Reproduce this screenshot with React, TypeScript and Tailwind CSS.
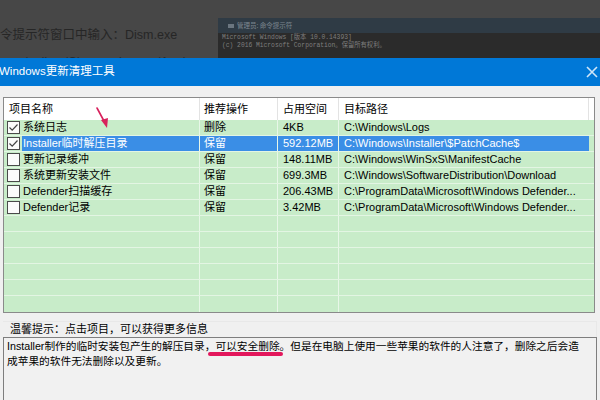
const rows = [
  { name: "系统日志", op: "删除", size: "4KB", path: "C:\\Windows\\Logs", checked: true },
  { name: "Installer临时解压目录", op: "保留", size: "592.12MB", path: "C:\\Windows\\Installer\\$PatchCache$", checked: true, selected: true },
  { name: "更新记录缓冲", op: "保留", size: "148.11MB", path: "C:\\Windows\\WinSxS\\ManifestCache", checked: false },
  { name: "系统更新安装文件", op: "保留", size: "699.3MB", path: "C:\\Windows\\SoftwareDistribution\\Download", checked: false },
  { name: "Defender扫描缓存", op: "保留", size: "206.43MB", path: "C:\\ProgramData\\Microsoft\\Windows Defender...", checked: false },
  { name: "Defender记录", op: "保留", size: "3.42MB", path: "C:\\ProgramData\\Microsoft\\Windows Defender...", checked: false },
];

const font = "font-['Liberation_Sans','Noto_Sans_CJK_SC',sans-serif]";

function Checkbox({ checked }: { checked: boolean }) {
  return (
    <div className="ml-[3px] mr-[2px] w-[13px] h-[13px] shrink-0 border border-[#4a4a4a] bg-[#fbfbfb] flex items-center justify-center">
      {checked && (
        <svg width="11" height="11" viewBox="0 0 11 11">
          <path d="M1.5 5.5 L4.2 8.2 L9.5 2.5" fill="none" stroke="#444" strokeWidth="1.2" />
        </svg>
      )}
    </div>
  );
}

export default function App() {
  const empty = 12 - rows.length;
  return (
    <div className={`relative w-[600px] h-[400px] overflow-hidden bg-[#f0f0f0] flex flex-col ${font}`}>
      {/* background page + cmd window */}
      <div className="relative h-[58px] shrink-0 overflow-hidden bg-[#474747]">
        <div className="pt-[26px] text-[12.5px] leading-[18px] text-[#262626] whitespace-nowrap">令提示符窗口中输入：Dism.exe</div>
        <div className="mt-[9px] ml-[24px] text-[12.5px] leading-[18px] text-[#2a2a2a] whitespace-nowrap">/online /Cleanup-Image /Analyze</div>
        <div className="absolute left-[218px] top-[18px] right-0 bottom-0 flex flex-col bg-[#2b2b2b]">
          <div className="h-[15px] bg-[#2f3b45] flex items-center pl-[10px] gap-[3px]">
            <div className="w-[6px] h-[4px] bg-[#6b7680]" />
            <span className="text-[6.5px] text-[#7d8790] font-['Noto_Sans_CJK_SC',sans-serif]">管理员: 命令提示符</span>
          </div>
          <div className="pl-[4px] pt-[1px] font-['Liberation_Mono','Noto_Sans_CJK_SC',monospace] text-[6.3px] leading-[8px] text-[#7e7e7e] whitespace-nowrap">
            <div>Microsoft Windows [版本 10.0.14393]</div>
            <div>(c) 2016 Microsoft Corporation。保留所有权利。</div>
          </div>
        </div>
      </div>

      {/* title bar */}
      <div className="h-[28px] shrink-0 bg-[#0078d7] flex items-center justify-between">
        <span className="-ml-[1px] text-[11.5px] text-white">Windows更新清理工具</span>
        <svg width="12" height="12" viewBox="0 0 12 12" className="mr-[2px]">
          <path d="M1 1 L11 11 M11 1 L1 11" stroke="#cfe6f8" strokeWidth="1.6" />
        </svg>
      </div>

      {/* list view */}
      <div className="mt-[11px] mx-[3px] w-[592px] border border-[#8a8a8a] bg-[#c8ecc9] text-[11px] text-black">
        <div className="h-[22px] bg-white flex items-center">
          <div className="w-[196px] h-full pl-[5px] flex items-center border-r border-[#e3e3e3]">项目名称</div>
          <div className="w-[78px] h-full pl-[4px] flex items-center border-r border-[#e3e3e3]">推荐操作</div>
          <div className="w-[61px] h-full pl-[5px] flex items-center border-r border-[#e3e3e3]">占用空间</div>
          <div className="w-[250px] h-full pl-[5px] flex items-center border-r border-[#e3e3e3]">目标路径</div>
          <div className="flex-1" />
        </div>
        {rows.map((r) => {
          const sel = r.selected ? "bg-[#3a8ee6] text-white" : "";
          return (
            <div key={r.name} className="h-[16px] flex items-center border-b border-[#e3f5e3] whitespace-nowrap">
              <div className="w-[196px] h-full flex items-center border-r border-[#e8f7e8]">
                <Checkbox checked={r.checked} />
                <div className={`flex-1 h-full flex items-center pl-[1px] ${sel}`}>{r.name}</div>
              </div>
              <div className={`w-[78px] h-full pl-[4px] flex items-center border-r border-[#e8f7e8] ${sel}`}>{r.op}</div>
              <div className={`w-[61px] h-full pl-[5px] flex items-center border-r border-[#e8f7e8] ${sel}`}>{r.size}</div>
              <div className={`w-[250px] h-full pl-[5px] flex items-center ${sel}`}>{r.path}</div>
              <div className="flex-1" />
            </div>
          );
        })}
        {[...Array(empty)].map((_, i) => (
          <div key={i} className="h-[16px] flex border-b border-[#e3f5e3] last:border-b-0">
            <div className="w-[196px] border-r border-[#e8f7e8]" />
            <div className="w-[78px] border-r border-[#e8f7e8]" />
            <div className="w-[61px] border-r border-[#e8f7e8]" />
            <div className="flex-1" />
          </div>
        ))}
      </div>

      {/* hint */}
      <div className="mx-[3px] mt-[8px] h-[16px] border-t border-r border-[#e8e8e8] flex items-center pl-[7px] text-[11px] text-black">
        温馨提示：点击项目，可以获得更多信息
      </div>

      {/* detail box */}
      <div className="mx-[3px] flex-1 border-l border-t border-r border-[#7e7e7e] bg-[#f1f1f1] pl-[3px] pt-[1px] text-[10.7px] leading-[15px] text-black whitespace-nowrap">
        <div>
          Installer制作的临时安装包产生的解压目录，
          <span className="relative">
            可以安全删除
            <span className="absolute -left-[7px] -right-[3px] top-[12px] h-[4px] rounded-full bg-[#e3175c]" />
          </span>
          。但是在电脑上使用一些苹果的软件的人注意了，删除之后会造
        </div>
        <div>成苹果的软件无法删除以及更新。</div>
      </div>

      {/* annotation arrow */}
      <svg className="absolute left-[93px] top-[105px]" width="20" height="26" viewBox="0 0 20 26">
        <path d="M4 3 L11 16" stroke="#d8215c" strokeWidth="1.6" strokeLinecap="round" />
        <path d="M8 15 L15 13 L14 23 Z" fill="#d8215c" />
      </svg>
    </div>
  );
}
